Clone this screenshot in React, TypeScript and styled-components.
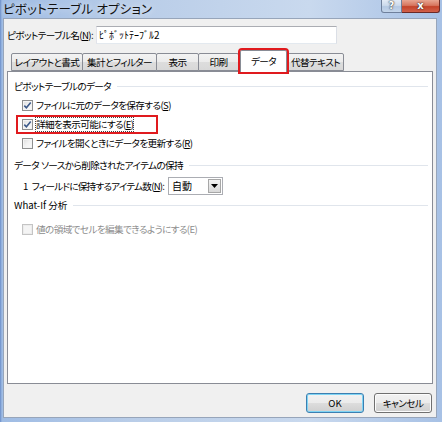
import React from "react";
import styled, { createGlobalStyle } from "styled-components";

const Global = createGlobalStyle`
  html, body { margin: 0; padding: 0; }
  body {
    width: 442px; height: 422px; overflow: hidden;
    font-family: "Noto Sans CJK JP", "Noto Sans", sans-serif;
    font-size: 9.6px; color: #000;
    letter-spacing: -0.6px;
    font-feature-settings: "palt";
  }
  * { box-sizing: border-box; }
`;

const Window = styled.div`
  width: 442px;
  height: 422px;
  display: flex;
  flex-direction: column;
  overflow: hidden;
  background: linear-gradient(90deg, #6a8dc8 0, #9fbce4 2px, #b9cde8 30%, #c9d9ee 70%, #a7c1e5 100%);
`;

const TitleBar = styled.div`
  height: 18px;
  flex: none;
  display: flex;
  align-items: flex-start;
  padding-left: 3px;
`;

const TitleText = styled.div`
  font-size: 12.5px;
  line-height: 18px;
  color: #111;
  letter-spacing: 0.2px;
  text-shadow: 0 0 6px rgba(255, 255, 255, 0.9);
`;

const CaptionButtons = styled.div`
  margin-left: auto;
  margin-right: 2px;
  display: flex;
`;

const CaptionButton = styled.div<{ $close?: boolean }>`
  width: ${(p) => (p.$close ? 38 : 21)}px;
  height: 13px;
  display: flex;
  align-items: center;
  justify-content: center;
  border: 1px solid ${(p) => (p.$close ? "#6b2a26" : "#6f809c")};
  border-top: none;
  border-left: ${(p) => (p.$close ? "none" : "1px solid #6f809c")};
  border-radius: ${(p) => (p.$close ? "0 0 3px 0" : "0 0 0 3px")};
  background: ${(p) =>
    p.$close
      ? "linear-gradient(180deg, #e8a692 0%, #d7765f 45%, #c4432a 55%, #d2614a 100%)"
      : "linear-gradient(180deg, #e3ebf6 0%, #ccdaec 45%, #b5c9e3 55%, #c4d5ea 100%)"};
  color: #fff;
  font-family: "DejaVu Sans", sans-serif;
  font-weight: bold;
  font-size: 10px;
  letter-spacing: 0;
  line-height: 1;
  text-shadow: 0 0 2px #333, 0 0 1px #222;
`;

const Client = styled.div`
  flex: 1;
  margin: 0 5px 4px 3px;
  background: #f0f0f0;
  border: 1px solid #97a5ba;
  display: flex;
  flex-direction: column;
  padding: 7px 3px 4px 3px;
`;

const NameRow = styled.div`
  display: flex;
  align-items: center;
  height: 18px;
`;

const FieldLabel = styled.span`
  width: 89px;
  line-height: 18px;
  white-space: nowrap;
`;

const TextInput = styled.div`
  width: 241px;
  height: 18px;
  background: #fff;
  border: 1px solid #abadb3;
  border-right-color: #dbdfe6;
  border-bottom-color: #e3e9ef;
  border-left-color: #e2e3ea;
  padding-left: 2px;
  line-height: 16px;
  font-size: 10px;
  letter-spacing: 0;
  white-space: nowrap;
`;

const TabArea = styled.div`
  flex: 1;
  display: flex;
  flex-direction: column;
  margin-top: 6px;
`;

const TabStrip = styled.div`
  display: flex;
  align-items: flex-end;
  height: 21px;
  padding-left: 4px;
`;

const Tab = styled.div<{ $w: number; $active?: boolean }>`
  width: ${(p) => p.$w}px;
  height: ${(p) => (p.$active ? 22 : 18)}px;
  margin-left: ${(p) => (p.$active ? 1 : -1)}px;
  margin-right: ${(p) => (p.$active ? 1 : 0)}px;
  margin-bottom: ${(p) => (p.$active ? -1 : 0)}px;
  position: relative;
  z-index: ${(p) => (p.$active ? 2 : 0)};
  border: 1px solid #898c95;
  border-bottom: ${(p) => (p.$active ? "none" : "1px solid #898c95")};
  border-radius: 2px 2px 0 0;
  background: ${(p) =>
    p.$active ? "#fff" : "linear-gradient(180deg, #f3f3f3 0%, #ebebeb 50%, #dddddd 51%, #d8d8d8 100%)"};
  display: flex;
  align-items: center;
  justify-content: center;
  white-space: nowrap;
  line-height: 16px;
  padding-bottom: ${(p) => (p.$active ? 2 : 0)}px;
  outline: ${(p) => (p.$active ? "2px solid #e01a1e" : "none")};
  outline-offset: 0;
  &:first-child { margin-left: 0; }
`;

const Panel = styled.div`
  flex: 1;
  background: #fff;
  border: 1px solid #898c95;
  position: relative;
  z-index: 1;
  padding: 5px 4px 0 5px;
  display: flex;
  flex-direction: column;
`;

const GroupHeader = styled.div<{ $mt?: number; $latin?: boolean }>`
  display: flex;
  align-items: center;
  height: 18px;
  margin-top: ${(p) => p.$mt ?? 0}px;
  padding-left: 1px;
  white-space: nowrap;
  letter-spacing: ${(p) => (p.$latin ? "0" : "-0.6px")};
  &::after {
    content: "";
    flex: 1;
    height: 1px;
    margin-left: 6px;
    background: #e0e5ec;
  }
`;

const OptionRow = styled.div<{ $mt?: number }>`
  display: flex;
  align-items: center;
  height: 19px;
  margin-top: ${(p) => p.$mt ?? 0}px;
  padding-left: 9px;
`;

const Highlight = styled.div`
  display: flex;
  align-items: center;
  width: 138px;
  height: 15px;
  margin-left: -4px;
  padding-left: 4px;
  outline: 2px solid #e01a1e;
`;

const Box = styled.span<{ $disabled?: boolean }>`
  width: 11px;
  height: 11px;
  flex: none;
  border: 1px solid ${(p) => (p.$disabled ? "#c4c4c4" : "#8e8f8f")};
  background: ${(p) =>
    p.$disabled ? "#f4f4f4" : "linear-gradient(135deg, #dcdcdc 0%, #f2f2f2 50%, #fbfbfb 100%)"};
  box-shadow: inset 0 0 0 1px ${(p) => (p.$disabled ? "#ececec" : "#f4f4f4")};
  display: flex;
  align-items: center;
  justify-content: center;
`;

const OptionText = styled.span<{ $disabled?: boolean; $focus?: boolean }>`
  margin-left: 3px;
  white-space: nowrap;
  line-height: 13px;
  color: ${(p) => (p.$disabled ? "#8d8d8d" : "#000")};
  outline: ${(p) => (p.$focus ? "1px dotted #444" : "none")};
`;

const Key = styled.span`
  text-decoration: underline;
  text-underline-offset: 1px;
`;

const Gap = styled.span`
  letter-spacing: 0;
  margin-right: 2px;
`;

const ComboRow = styled.div`
  display: flex;
  align-items: center;
  height: 18px;
  margin-top: 3px;
  padding-left: 10px;
`;

const ComboLabel = styled.span`
  width: 145px;
  white-space: nowrap;
  letter-spacing: -0.75px;
`;

const Combo = styled.div`
  width: 55px;
  height: 18px;
  border: 1px solid #abadb3;
  background: #fff;
  display: flex;
  align-items: center;
  padding: 1px;
`;

const ComboValue = styled.span`
  flex: 1;
  padding-left: 2px;
  line-height: 14px;
  font-size: 10px;
  letter-spacing: 0;
`;

const ComboArrow = styled.span`
  width: 13px;
  height: 14px;
  border: 1px solid #a7a7a7;
  background: linear-gradient(180deg, #f4f4f4 0%, #e6e6e6 50%, #d9d9d9 100%);
  display: flex;
  align-items: center;
  justify-content: center;
`;

const ButtonRow = styled.div`
  display: flex;
  justify-content: flex-end;
  gap: 10px;
  margin-top: 9px;
  padding-right: 1px;
`;

const DialogButton = styled.div<{ $default?: boolean }>`
  width: 58px;
  height: 20px;
  border-radius: 3px;
  border: 1px solid ${(p) => (p.$default ? "#3c7fb1" : "#707070")};
  background: linear-gradient(180deg, #f2f2f2 0%, #ebebeb 50%, #dddddd 51%, #cfcfcf 100%);
  box-shadow: inset 0 0 0 1px ${(p) => (p.$default ? "#7fd4f4" : "#fcfcfc")};
  display: flex;
  align-items: center;
  justify-content: center;
  line-height: 16px;
  letter-spacing: ${(p) => (p.$default ? "0" : "-0.6px")};
`;

const Check = () => (
  <svg width="9" height="9" viewBox="0 0 9 9">
    <path d="M1.3 4.6 L3.4 6.8 L7.7 1.6" fill="none" stroke="#3d5a8a" strokeWidth="1.6" />
  </svg>
);

const Caret = () => (
  <svg width="7" height="4" viewBox="0 0 7 4">
    <path d="M0 0 H7 L3.5 4 Z" fill="#000" />
  </svg>
);

const tabs = [
  { label: "レイアウトと書式", w: 72 },
  { label: "集計とフィルター", w: 75 },
  { label: "表示", w: 43 },
  { label: "印刷", w: 41 },
  { label: "データ", w: 47, active: true },
  { label: "代替テキスト", w: 57 },
];

export default function App() {
  return (
    <>
      <Global />
      <Window>
        <TitleBar>
          <TitleText>ピボットテーブル オプション</TitleText>
          <CaptionButtons>
            <CaptionButton>?</CaptionButton>
            <CaptionButton $close>x</CaptionButton>
          </CaptionButtons>
        </TitleBar>
        <Client>
          <NameRow>
            <FieldLabel>
              ピボットテーブル名(<Key>N</Key>):
            </FieldLabel>
            <TextInput>ﾋﾟﾎﾞｯﾄﾃｰﾌﾞﾙ2</TextInput>
          </NameRow>
          <TabArea>
            <TabStrip>
              {tabs.map((t) => (
                <Tab key={t.label} $w={t.w} $active={t.active}>
                  {t.label}
                </Tab>
              ))}
            </TabStrip>
            <Panel>
              <GroupHeader>ピボットテーブルのデータ</GroupHeader>
              <OptionRow $mt={1}>
                <Box>
                  <Check />
                </Box>
                <OptionText>
                  ファイルに元のデータを保存する(<Key>S</Key>)
                </OptionText>
              </OptionRow>
              <OptionRow>
                <Highlight>
                  <Box>
                    <Check />
                  </Box>
                  <OptionText $focus>
                    詳細を表示可能にする(<Key>E</Key>)
                  </OptionText>
                </Highlight>
              </OptionRow>
              <OptionRow>
                <Box />
                <OptionText>
                  ファイルを開くときにデータを更新する(<Key>R</Key>)
                </OptionText>
              </OptionRow>
              <GroupHeader $mt={3}>
                データ<Gap> </Gap>ソースから削除されたアイテムの保持
              </GroupHeader>
              <ComboRow>
                <ComboLabel>
                  1<Gap> </Gap>フィールドに保持するアイテム数(<Key>N</Key>):
                </ComboLabel>
                <Combo>
                  <ComboValue>自動</ComboValue>
                  <ComboArrow>
                    <Caret />
                  </ComboArrow>
                </Combo>
              </ComboRow>
              <GroupHeader $mt={1} $latin>
                What-If 分析
              </GroupHeader>
              <OptionRow $mt={6}>
                <Box $disabled />
                <OptionText $disabled>値の領域でセルを編集できるようにする(E)</OptionText>
              </OptionRow>
            </Panel>
          </TabArea>
          <ButtonRow>
            <DialogButton $default>OK</DialogButton>
            <DialogButton>キャンセル</DialogButton>
          </ButtonRow>
        </Client>
      </Window>
    </>
  );
}
